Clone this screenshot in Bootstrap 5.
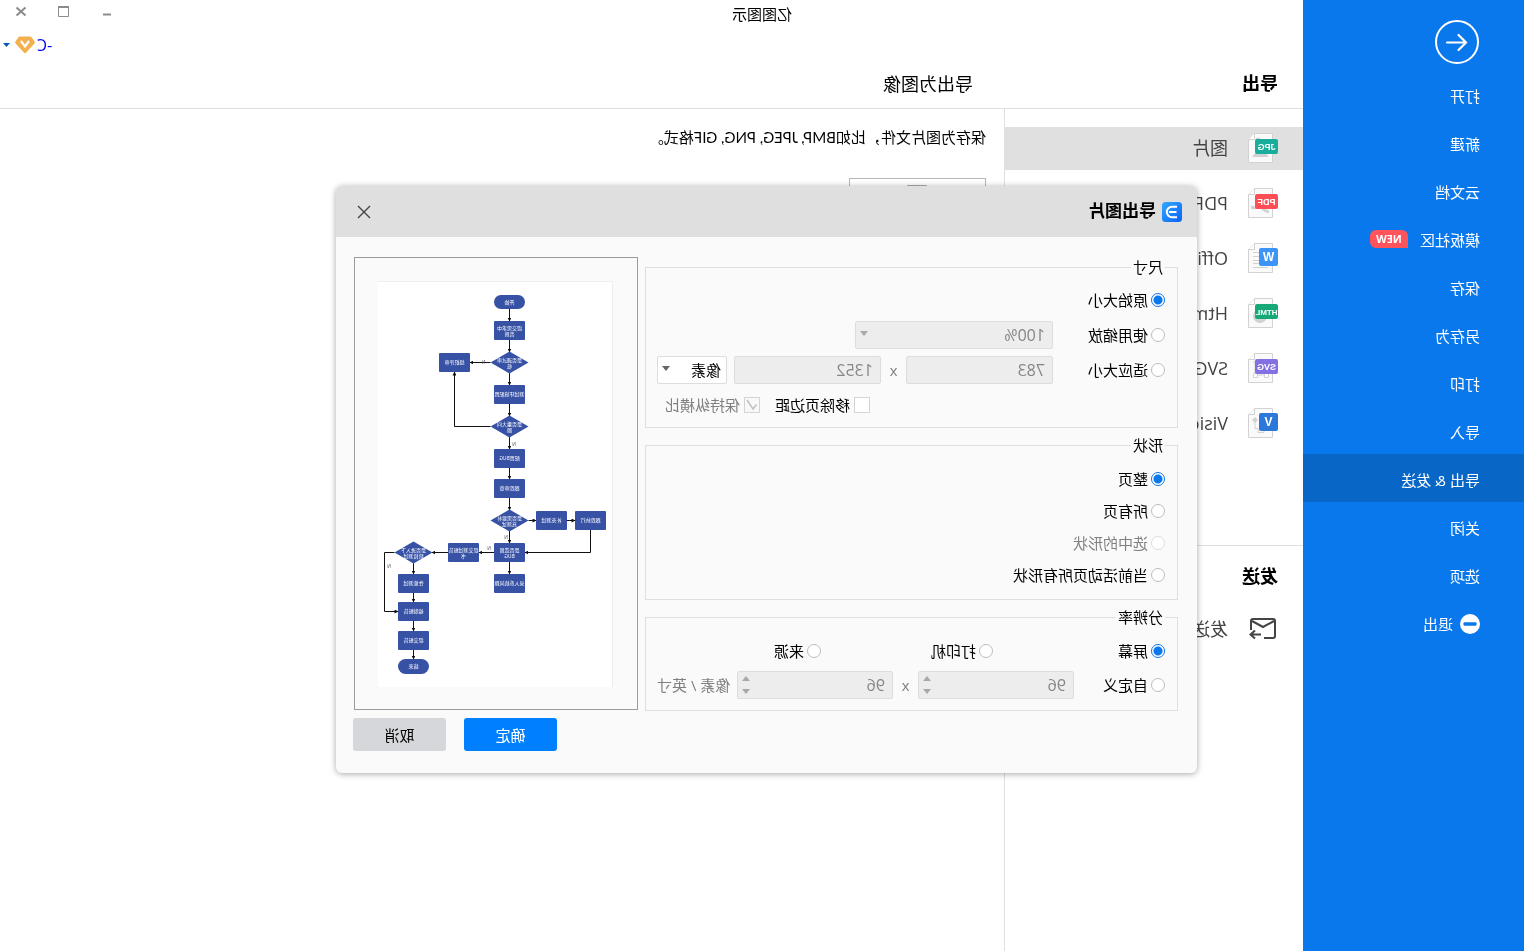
<!DOCTYPE html>
<html lang="zh-CN">
<head>
<meta charset="utf-8">
<meta name="viewport" content="width=device-width, initial-scale=1">
<title>亿图图示</title>
<link href="https://cdn.jsdelivr.net/npm/bootstrap@5.3.0/dist/css/bootstrap.min.css" rel="stylesheet">
<style>
  :root { --accent: #0a78ed; --line: #dfdfdf; }
  body { font-family: "Open Sans", "Noto Sans CJK SC", sans-serif; font-size: 15px; line-height: 20px; color: #000; background: #fff; overflow-x: hidden; }
  a { text-decoration: none; }
  /* the whole window is laid out left to right and shown flipped */
  .flip { transform: scaleX(-1); }

  .side { width: 221px; background: var(--accent); }
  .side .back { margin: 20px 0 6px 45px; width: 44px; height: 44px; }
  .side .item { height: 48px; padding: 3px 0 0 44px; color: #fff; }
  .side .item.active { background: #0866c6; }
  .tag-new { background: #ff545c; color: #fff; font-size: 11px; font-weight: 700; line-height: 18px; width: 38px; text-align: center; border-radius: 6px 6px 6px 0; margin: 0 0 2px 12px; }

  .titlebar { height: 28px; }
  .win { right: 14px; height: 24px; gap: 29px; }
  .account { height: 32px; margin-top: 28px; padding: 2px 3px 0 0; color: #0000f0; font-size: 16px; }
  .account .gem { margin: 0 5px 0 2px; }
  .heads { height: 49px; border-bottom: 1px solid var(--line); font-size: 18px; }
  .heads h1, .sub h2 { font-size: 18px; font-weight: 700; }
  .col-list { width: 299px; border-right: 1px solid var(--line); }
  .heads .h-list { width: 330px; padding-left: 25px; }
  .kinds { padding-top: 18px; gap: 12px; }
  .kind { height: 43px; padding: 0 0 2px 25px; gap: 20px; font-size: 18px; color: #444; }
  .kind.active { background: #e0e0e0; }
  .kind text { font-family: "Liberation Sans", sans-serif; }
  .send { margin-top: 100px; border-top: 1px solid var(--line); }
  .sub { height: 62px; padding-left: 25px; }
  .pane { padding: 18px 0 0 18px; }
  .pane p { font-family: Lato, "Noto Sans CJK SC", sans-serif; }
  .tile { width: 137px; height: 120px; margin-top: 31px; border: 1px solid #b8b8b8; padding-top: 6px; background: #fff; }

  .overlay { top: 186px; padding-right: 9px; }
  .dlg { width: 861px; background: #fafafa; border-radius: 6px; box-shadow: 0 1px 6px rgba(0,0,0,.35); overflow: hidden; }
  .dlg-head { height: 51px; background: #dfdfdf; padding: 0 20px 0 15px; }
  .dlg-head h2 { font-size: 17px; font-weight: 700; margin-left: 6px; }
  .dlg-body { padding: 20px 18px 22px 19px; gap: 7px; }
  fieldset { border: 1px solid var(--line); padding: 9px 11px 8px 12px; }
  fieldset + fieldset { margin-top: 7px; padding-top: 10px; padding-bottom: 10px; }
  fieldset:last-child { padding-bottom: 11px; }
  fieldset legend { float: none; width: auto; font-size: 15px; line-height: 20px; margin: 0; padding: 0 2px; }
  .line { height: 28px; }
  .g7 { gap: 7px; } .g4 { gap: 4px; } .g6 { gap: 6px; }
  .first { width: 112px; }
  .first-narrow { width: 91px; }
  .dev { width: 172px; }
  .opt { gap: 3px; }
  .opt input { appearance: none; width: 14px; height: 14px; margin: 0; border: 1px solid #bdbdbd; border-radius: 50%; background: #fff; flex: none; }
  .opt input:checked { border-color: var(--accent); background: radial-gradient(circle, var(--accent) 4px, #fff 5px); }
  .opt input:disabled { border-color: #dedede; }
  .tick { gap: 4px; }
  .tick input { appearance: none; width: 16px; height: 16px; margin: 0; border: 1px solid #d4d4d4; background: #fff; flex: none; }
  .tick input:checked { background: #f8f8f8 url("data:image/svg+xml,%3Csvg xmlns='http://www.w3.org/2000/svg' viewBox='0 0 14 14'%3E%3Cpath d='M2.500 6.500l3.500 4.500l6-9' fill='none' stroke='%23c0c0c0' stroke-width='1.500'/%3E%3C/svg%3E"); }
  .off { color: #808080; }
  .field { height: 28px; padding: 0 7px; font-size: 16px; line-height: 26px; border: 1px solid #dcdddf; border-radius: 2px; background-color: #ededed; color: #858585; min-width: 0; opacity: 1; }
  select.field { appearance: none; background-image: url("data:image/svg+xml,%3Csvg xmlns='http://www.w3.org/2000/svg' viewBox='0 0 8 5'%3E%3Cpath d='M0 0h8l-4 5z' fill='%23a8a8a8'/%3E%3C/svg%3E"); background-repeat: no-repeat; background-size: 8px 5px; background-position: right 4px top 9px; }
  select.unit { background-color: #fff; color: #000; font-size: 15px; padding-left: 5px; background-image: url("data:image/svg+xml,%3Csvg xmlns='http://www.w3.org/2000/svg' viewBox='0 0 8 5'%3E%3Cpath d='M0 0h8l-4 5z' fill='%23666'/%3E%3C/svg%3E"); }
  .spin { background-image: url("data:image/svg+xml,%3Csvg xmlns='http://www.w3.org/2000/svg' viewBox='0 0 8 18'%3E%3Cpath d='M0 5h8l-4-5zM0 13h8l-4 5z' fill='%23a8a8a8'/%3E%3C/svg%3E"); background-repeat: no-repeat; background-size: 8px 18px; background-position: right 4px top 4px; }
  .w-zoom { width: 198px; } .w-size { width: 147px; } .w-unit { width: 70px; } .w-dpi { width: 156px; }
  .times { width: 25px; text-align: center; color: #808080; }
  .ticks { padding-left: 295px; gap: 15px; }

  .preview { border: 1px solid #9b9b9b; padding: 23px 23px 22px 24px; }
  .right { width: 284px; }
  .acts { gap: 18px; margin: 8px -1px 0 0; }
  .acts .btn { width: 93px; height: 33px; padding: 2px 0 0; font-size: 15px; border: 0; border-radius: 3px; }
  .ok { background: #0080ff; color: #fff; } .no { background: #d5d7da; color: #000; }
  .icon-btn { border: 0; background: none; padding: 0; display: flex; }
</style>
</head>
<body>
<div class="flip d-flex min-vh-100 position-relative">

  <nav class="side flex-shrink-0 d-flex flex-column">
    <button class="back icon-btn" aria-label="返回">
      <svg width="44" height="44" viewBox="0 0 44 44" fill="none" stroke="#fff" stroke-width="2"><circle cx="22" cy="22" r="21"/><path d="M32 22.500H13M20.500 15l-7.500 7.500 7.500 7.500" stroke-width="2.200" stroke-linecap="round"/></svg>
    </button>
    <a class="item d-flex align-items-center" href="#">打开</a>
    <a class="item d-flex align-items-center" href="#">新建</a>
    <a class="item d-flex align-items-center" href="#">云文档</a>
    <a class="item d-flex align-items-center" href="#">模板社区<span class="tag-new">NEW</span></a>
    <a class="item d-flex align-items-center" href="#">保存</a>
    <a class="item d-flex align-items-center" href="#">另存为</a>
    <a class="item d-flex align-items-center" href="#">打印</a>
    <a class="item d-flex align-items-center" href="#">导入</a>
    <a class="item active d-flex align-items-center" href="#">导出 &amp; 发送</a>
    <a class="item d-flex align-items-center" href="#">关闭</a>
    <a class="item d-flex align-items-center" href="#">选项</a>
    <a class="item d-flex align-items-center g7" href="#">
      <svg width="20" height="20" viewBox="0 0 20 20"><circle cx="10" cy="10" r="10" fill="#fff"/><rect x="3.500" y="8.300" width="13" height="3.400" rx="1" fill="#0a78ed"/></svg>退出</a>
  </nav>

  <header class="titlebar position-absolute top-0 start-0 w-100 d-flex align-items-center justify-content-center">
    <span>亿图图示</span>
    <div class="win position-absolute top-0 d-flex align-items-center">
      <button class="icon-btn" aria-label="最小化"><svg width="14" height="14" viewBox="0 0 14 14"><path d="M3 9.500h8" stroke="#8c8c8c" stroke-width="2"/></svg></button>
      <button class="icon-btn" aria-label="最大化"><svg width="14" height="14" viewBox="0 0 14 14"><path d="M2.500 2h10v9.500h-10z" fill="none" stroke="#8c8c8c"/><path d="M2 2h11" stroke="#8c8c8c" stroke-width="2"/></svg></button>
      <button class="icon-btn" aria-label="关闭窗口"><svg width="14" height="14" viewBox="0 0 14 14"><path d="M2.500 2.500l9 8M11.500 2.500l-9 8" stroke="#8c8c8c" stroke-width="2"/></svg></button>
    </div>
  </header>

  <main class="flex-grow-1 d-flex flex-column">
    <div class="account d-flex align-items-center justify-content-end">
      <span>-C</span>
      <svg class="gem" width="20" height="18" viewBox="0 0 20 18"><path d="M5 0.500h10q1 0 1.600.8l3 4.200q.7 1-.2 2l-8.400 9.300q-1 1-2 0l-8.400-9.300q-.9-1-.2-2l3-4.200q.6-.8 1.600-.8z" fill="#f4b04e"/><path d="M6 5l4 5.500 4-5.500" fill="none" stroke="#fff" stroke-width="2.200"/></svg>
      <svg width="7" height="4" viewBox="0 0 7 4"><path d="M0 0h7l-3.500 4z" fill="#0a58b8"/></svg>
    </div>
    <div class="heads d-flex align-items-center">
      <h1 class="h-list m-0 flex-shrink-0">导出</h1>
      <span>导出为图像</span>
    </div>
    <div class="d-flex flex-grow-1">
      <section class="col-list flex-shrink-0">
        <div class="kinds d-flex flex-column">
          <a class="kind active d-flex align-items-center" href="#">
            <svg width="30" height="30" viewBox="0 0 30 30"><path d="M5.500.5h18l6 6v23h-24z" fill="#fafafa" stroke="#d2d2d2"/><path d="M23.500.5v6h6" fill="#fff" stroke="#d2d2d2"/><circle cx="20" cy="7" r="2.500" fill="#d2d2d2"/><path d="M9 24l5-6 8 1 4 5z" fill="#d2d2d2"/><rect y="6" width="23" height="15" rx="2" fill="#19ae9c"/><text x="11.500" y="17" font-size="9" font-weight="700" fill="#fff" text-anchor="middle">JPG</text></svg>图片</a>
          <a class="kind d-flex align-items-center" href="#">
            <svg width="30" height="30" viewBox="0 0 30 30"><path d="M5.500.5h18l6 6v23h-24z" fill="#fafafa" stroke="#d2d2d2"/><path d="M23.500.5v6h6" fill="#fff" stroke="#d2d2d2"/><path d="M9 24c5-1 8-6 8-6s4 3 10 1M12 23c2-1 4-3 5-6" fill="none" stroke="#d2d2d2" stroke-width="3"/><rect y="6" width="23" height="15" rx="2" fill="#ff4d55"/><text x="11.500" y="17" font-size="9" font-weight="700" fill="#fff" text-anchor="middle">PDF</text></svg>PDF</a>
          <a class="kind d-flex align-items-center" href="#">
            <svg width="30" height="30" viewBox="0 0 30 30"><path d="M5.500.5h18l6 6v23h-24z" fill="#fafafa" stroke="#d2d2d2"/><path d="M23.500.5v6h6" fill="#fff" stroke="#d2d2d2"/><path d="M19 9.500h6M19 13.500h6M19 17.500h6M19 20.500h6M10 24.500h15" stroke="#d2d2d2"/><rect y="5" width="19" height="18" rx="2" fill="#3d94f6"/><text x="9.500" y="18" font-size="12" font-weight="700" fill="#fff" text-anchor="middle">W</text></svg>Office</a>
          <a class="kind d-flex align-items-center" href="#">
            <svg width="30" height="30" viewBox="0 0 30 30"><path d="M5.500.5h18l6 6v23h-24z" fill="#fafafa" stroke="#d2d2d2"/><path d="M23.500.5v6h6" fill="#fff" stroke="#d2d2d2"/><circle cx="18" cy="18" r="7" fill="#d2d2d2"/><rect y="6" width="23" height="15" rx="2" fill="#17a878"/><text x="11.500" y="17" font-size="8" font-weight="700" fill="#fff" text-anchor="middle">HTML</text></svg>Html</a>
          <a class="kind d-flex align-items-center" href="#">
            <svg width="30" height="30" viewBox="0 0 30 30"><path d="M5.500.5h18l6 6v23h-24z" fill="#fafafa" stroke="#d2d2d2"/><path d="M23.500.5v6h6" fill="#fff" stroke="#d2d2d2"/><path d="M11 8v16M23 8v16M9 22h16M9 9h16" stroke="#d2d2d2"/><path d="M9.500 20.500h4v4h-4zM20.500 20.500h4v4h-4z" fill="#fff" stroke="#d2d2d2"/><rect y="6" width="23" height="15" rx="2" fill="#8370e3"/><text x="11.500" y="17" font-size="9" font-weight="700" fill="#fff" text-anchor="middle">SVG</text></svg>SVG</a>
          <a class="kind d-flex align-items-center" href="#">
            <svg width="30" height="30" viewBox="0 0 30 30"><path d="M5.500.5h18l6 6v23h-24z" fill="#fafafa" stroke="#d2d2d2"/><path d="M23.500.5v6h6" fill="#fff" stroke="#d2d2d2"/><path d="M23 9l3 3-3 3-3-3z" fill="#d2d2d2"/><path d="M23 13v8M23 20.500h-3v4h-6v-3" fill="none" stroke="#d2d2d2"/><rect y="5" width="19" height="18" rx="2" fill="#2b78da"/><text x="9.500" y="18" font-size="12" font-weight="700" fill="#fff" text-anchor="middle">V</text></svg>Visio</a>
        </div>
        <div class="send">
          <div class="sub d-flex align-items-center"><h2 class="m-0">发送</h2></div>
          <a class="kind d-flex align-items-center" href="#">
            <svg width="30" height="24" viewBox="0 0 30 24" fill="none" stroke="#444" stroke-width="2"><path d="M14 21H5a2 2 0 0 1-2-2V4a2 2 0 0 1 2-2h20a2 2 0 0 1 2 2v9"/><path d="M4 4l11 6 11-6"/><path d="M17 17.500H27.500M23 13.500l4.500 4-4.500 4"/></svg>发送</a>
        </div>
      </section>
      <section class="pane">
        <p class="m-0">保存为图片文件，比如BMP, JPEG, PNG, GIF格式。</p>
        <div class="tile text-center"><svg class="d-block mx-auto" width="20" height="20" viewBox="0 0 20 20"><path d="M.5.5h19v19H.5z" fill="#eee" stroke="#aaa"/></svg></div>
      </section>
    </div>
  </main>

  <div class="overlay position-absolute start-0 end-0 d-flex justify-content-center">
    <form class="dlg" role="dialog" aria-labelledby="dlg-title">
      <div class="dlg-head d-flex align-items-center">
        <svg width="20" height="20" viewBox="0 0 20 20"><defs><linearGradient id="lg" x1="1" x2="0" y1="0" y2="1"><stop stop-color="#35a8ff"/><stop offset="1" stop-color="#0a62f5"/></linearGradient></defs><rect width="20" height="20" rx="3.500" fill="url(#lg)"/><path d="M5 4.800H10a5.200 5.200 0 0 1 0 10.400H5M5.500 10H13" fill="none" stroke="#fff" stroke-width="2"/></svg>
        <h2 id="dlg-title" class="mb-0">导出图片</h2>
        <button type="button" class="icon-btn ms-auto" aria-label="关闭"><svg width="16" height="16" viewBox="0 0 16 16"><path d="M2 2l12 12M14 2L2 14" stroke="#444" stroke-width="1.400"/></svg></button>
      </div>
      <div class="dlg-body d-flex">
        <div class="flex-grow-1">
          <fieldset>
            <legend>尺寸</legend>
            <div class="d-flex flex-column g7">
              <div class="line d-flex align-items-center"><label class="opt d-flex align-items-center"><input type="radio" name="size" checked>原始大小</label></div>
              <div class="line d-flex align-items-center">
                <label class="opt first d-flex align-items-center"><input type="radio" name="size">使用缩放</label>
                <select class="field w-zoom" aria-label="缩放" disabled><option>100%</option></select>
              </div>
              <div class="line d-flex align-items-center">
                <label class="opt first d-flex align-items-center"><input type="radio" name="size">适应大小</label>
                <input class="field w-size" type="text" value="783" aria-label="宽" disabled>
                <span class="times">x</span>
                <input class="field w-size" type="text" value="1352" aria-label="高" disabled>
                <select class="field unit w-unit ms-auto" aria-label="单位"><option>像素</option></select>
              </div>
              <div class="line ticks d-flex align-items-center">
                <label class="tick d-flex align-items-center"><input type="checkbox">移除页边距</label>
                <label class="tick off d-flex align-items-center"><input type="checkbox" checked disabled>保持纵横比</label>
              </div>
            </div>
          </fieldset>
          <fieldset>
            <legend>形状</legend>
            <div class="d-flex flex-column g4">
              <div class="line d-flex align-items-center"><label class="opt d-flex align-items-center"><input type="radio" name="shape" checked>整页</label></div>
              <div class="line d-flex align-items-center"><label class="opt d-flex align-items-center"><input type="radio" name="shape">所有页</label></div>
              <div class="line d-flex align-items-center"><label class="opt off d-flex align-items-center"><input type="radio" name="shape" disabled>选中的形状</label></div>
              <div class="line d-flex align-items-center"><label class="opt d-flex align-items-center"><input type="radio" name="shape">当前活动页所有形状</label></div>
            </div>
          </fieldset>
          <fieldset>
            <legend>分辨率</legend>
            <div class="d-flex flex-column g6">
              <div class="line d-flex align-items-center">
                <label class="opt dev d-flex align-items-center"><input type="radio" name="dpi" checked>屏幕</label>
                <label class="opt dev d-flex align-items-center"><input type="radio" name="dpi">打印机</label>
                <label class="opt d-flex align-items-center"><input type="radio" name="dpi">来源</label>
              </div>
              <div class="line d-flex align-items-center">
                <label class="opt first-narrow d-flex align-items-center"><input type="radio" name="dpi">自定义</label>
                <input class="field spin w-dpi" type="text" value="96" aria-label="水平分辨率" disabled>
                <span class="times">x</span>
                <input class="field spin w-dpi" type="text" value="96" aria-label="垂直分辨率" disabled>
                <span class="off ms-auto">像素 / 英寸</span>
              </div>
            </div>
          </fieldset>
        </div>
        <div class="right flex-shrink-0">
          <div class="preview">
            <svg class="d-block" width="235" height="406" viewBox="0 0 235 406" aria-label="流程图预览">
              <defs><marker id="ar" viewBox="0 0 4 4" refX="3.500" refY="2" markerWidth="4" markerHeight="4" markerUnits="userSpaceOnUse" orient="auto"><path d="M0 0l4 2-4 2z" fill="#111"/></marker></defs>
              <rect width="235" height="406" fill="#fff"/><path d="M.5 406V.5H235" fill="none" stroke="#eee"/>
              <g fill="none" stroke="#111" stroke-width="1" marker-end="url(#ar)">
                <path d="M103.500 28v12"/><path d="M103.500 59v12"/><path d="M103.500 92v12"/><path d="M103.500 123v12"/><path d="M103.500 156v12"/><path d="M103.500 187v11"/><path d="M103.500 217v12"/><path d="M103.500 250v12"/><path d="M103.500 281v12"/>
                <path d="M122.500 81.500h20.500"/><path d="M122.500 145.500h36V91"/>
                <path d="M84.500 239.500H77"/><path d="M46 239.500h-8"/><path d="M22.500 249v22.500H88"/>
                <path d="M119 271.500h15"/><path d="M165 271.500h16"/><path d="M218.500 271.500h10v59H215"/>
                <path d="M199.500 282v11"/><path d="M199.500 312v9"/><path d="M199.500 340v10"/><path d="M199.500 369v9"/>
              </g>
              <g fill="#3751a5">
                <rect x="88" y="14" width="31" height="14" rx="7"/><rect x="88" y="40" width="31" height="19" rx="1"/><path d="M84.500 81.500l19-11 19 11-19 11z"/><rect x="88" y="104" width="31" height="19" rx="1"/><path d="M84.500 145.500l19-11 19 11-19 11z"/><rect x="88" y="168" width="31" height="19" rx="1"/><rect x="88" y="198" width="31" height="19" rx="1"/><path d="M84.500 239.500l19-11 19 11-19 11z"/><rect x="88" y="262" width="31" height="19" rx="1"/><rect x="88" y="293" width="31" height="19" rx="1"/>
                <rect x="143" y="72" width="31" height="19" rx="1"/><rect x="46" y="230" width="31" height="19" rx="1"/><rect x="7" y="230" width="31" height="19" rx="1"/><rect x="134" y="262" width="31" height="19" rx="1"/>
                <path d="M180.500 271.500l19-11 19 11-19 11z"/><rect x="184" y="293" width="31" height="19" rx="1"/><rect x="184" y="321" width="31" height="19" rx="1"/><rect x="184" y="350" width="31" height="19" rx="1"/><rect x="184" y="378" width="31" height="15" rx="7.500"/>
              </g>
              <g fill="#fff" font-size="5" text-anchor="middle">
                <text x="103.500" y="23">开始</text>
                <text x="103.500" y="49">提交需求中</text><text x="103.500" y="55">否则</text>
                <text x="103.500" y="81">是否通过审</text><text x="103.500" y="87">核</text>
                <text x="103.500" y="115">测试环境配置</text>
                <text x="103.500" y="145">是否重大问</text><text x="103.500" y="151">题</text>
                <text x="103.500" y="179">配置BUG</text>
                <text x="103.500" y="209">跟踪审查</text>
                <text x="103.500" y="239">是否需要补</text><text x="103.500" y="245">充测试</text>
                <text x="103.500" y="271">是否遗留</text><text x="103.500" y="277">BUG</text>
                <text x="103.500" y="304">录入系统问题</text>
                <text x="158.500" y="83">组织评审</text>
                <text x="61.500" y="241">补充测试</text><text x="22.500" y="241">跟踪执行</text>
                <text x="149.500" y="271">提交测试报告</text><text x="149.500" y="277">书</text>
                <text x="199.500" y="271">是否进入下</text><text x="199.500" y="277">阶段测试</text>
                <text x="199.500" y="304">性能测试</text><text x="199.500" y="332">编制报告</text><text x="199.500" y="361">提交报告</text><text x="199.500" y="387">结束</text>
              </g>
              <g fill="#555" font-size="5" text-anchor="middle">
                <text x="129.500" y="83">N</text><text x="99" y="165">N</text><text x="107" y="258">N</text><text x="124" y="269">N</text><text x="224" y="287">N</text>
              </g>
            </svg>
          </div>
          <div class="acts d-flex justify-content-end">
            <button type="submit" class="btn ok">确定</button>
            <button type="button" class="btn no">取消</button>
          </div>
        </div>
      </div>
    </form>
  </div>
</div>
<script src="https://cdn.jsdelivr.net/npm/bootstrap@5.3.0/dist/js/bootstrap.bundle.min.js"></script>
</body>
</html>
